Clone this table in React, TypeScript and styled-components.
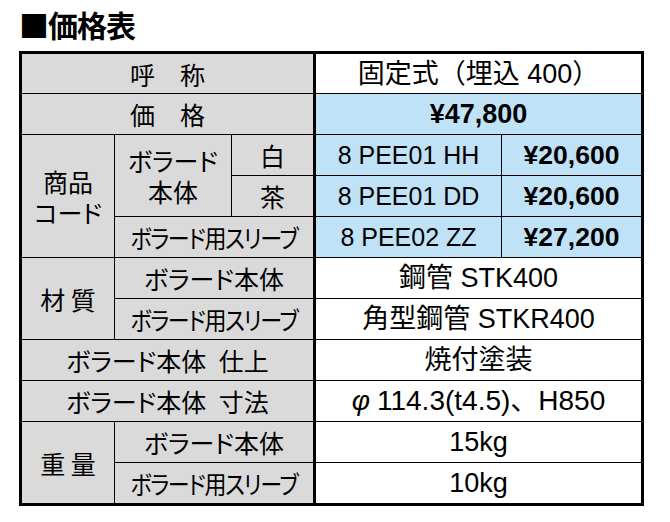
import React from 'react';
import styled, { createGlobalStyle } from 'styled-components';

const GlobalStyle = createGlobalStyle`
  html, body {
    margin: 0;
    padding: 0;
    background: #ffffff;
  }
  body {
    font-family: "Noto Sans CJK JP", sans-serif;
    color: #000;
  }
`;

type Tone = 'head' | 'blue' | 'white';

const toneColor: Record<Tone, string> = {
    head: '#dadada',
    blue: '#bfe2f7',
    white: '#ffffff',
};

interface CellProps {
    $col: string;
    $row?: string;
    $tone: Tone;
    $value?: boolean;
    $size?: number;
    $bold?: boolean;
    $split?: boolean;
}

const Styled = {
    Page: styled.div`
    padding: 4px 0 0 19px;
    width: 625px;
  `,
    Title: styled.h1`
    margin: 0 0 7px 0;
    font-family: "Noto Sans CJK JP", sans-serif;
    font-size: 30px;
    font-weight: 700;
    line-height: 40px;
    letter-spacing: -1px;
  `,
    Table: styled.div`
    display: grid;
    grid-template-columns: 92px 116px 81px 187px 139px;
    grid-template-rows: 39px repeat(10, 40px);
    gap: 1px;
    background: #000;
    border: 3px solid #000;
  `,
    Cell: styled.div<CellProps>`
    grid-column: ${p => p.$col};
    grid-row: ${p => p.$row ?? 'auto'};
    margin-left: ${p => (p.$split ? '2px' : '0')};
    display: flex;
    flex-direction: column;
    align-items: center;
    justify-content: center;
    gap: 1px;
    text-align: center;
    background: ${p => toneColor[p.$tone]};
    font-family: ${p => (p.$value ? '"Liberation Sans", "Noto Sans CJK JP", sans-serif' : '"Noto Sans CJK JP", sans-serif')};
    font-feature-settings: ${p => (p.$value ? 'normal' : '"palt"')};
    font-size: ${p => p.$size ?? 25}px;
    font-weight: ${p => (p.$bold ? 700 : 400)};
    line-height: 30px;
    white-space: nowrap;
  `,
    Squeeze: styled.span`
    display: inline-block;
    letter-spacing: -1.5px;
    transform: scaleX(0.88);
  `,
    Phi: styled.span`
    font-style: italic;
    margin-right: 7px;
  `,
};

const Sleeve = () => <Styled.Squeeze>ボラード用スリーブ</Styled.Squeeze>;
const body = 'ボラード本体';

export default function App() {
    return (
        <>
            <GlobalStyle />
            <Styled.Page>
                <Styled.Title>■価格表</Styled.Title>
                <Styled.Table>
                    <Styled.Cell $col="1 / 4" $tone="head">呼　称</Styled.Cell>
                    <Styled.Cell $col="4 / 6" $tone="white" $value $size={27} $split>固定式（埋込 400）</Styled.Cell>

                    <Styled.Cell $col="1 / 4" $tone="head">価　格</Styled.Cell>
                    <Styled.Cell $col="4 / 6" $tone="blue" $value $size={27} $bold $split>¥47,800</Styled.Cell>

                    <Styled.Cell $col="1" $row="3 / 6" $tone="head"><span>商品</span><span>コード</span></Styled.Cell>
                    <Styled.Cell $col="2" $row="3 / 5" $tone="head"><span>ボラード</span><span>本体</span></Styled.Cell>
                    <Styled.Cell $col="3" $row="3" $tone="head">白</Styled.Cell>
                    <Styled.Cell $col="4" $row="3" $tone="blue" $value $split>8 PEE01 HH</Styled.Cell>
                    <Styled.Cell $col="5" $row="3" $tone="blue" $value $size={26.5} $bold>¥20,600</Styled.Cell>
                    <Styled.Cell $col="3" $row="4" $tone="head">茶</Styled.Cell>
                    <Styled.Cell $col="4" $row="4" $tone="blue" $value $split>8 PEE01 DD</Styled.Cell>
                    <Styled.Cell $col="5" $row="4" $tone="blue" $value $size={26.5} $bold>¥20,600</Styled.Cell>
                    <Styled.Cell $col="2 / 4" $row="5" $tone="head"><Sleeve /></Styled.Cell>
                    <Styled.Cell $col="4" $row="5" $tone="blue" $value $split>8 PEE02 ZZ</Styled.Cell>
                    <Styled.Cell $col="5" $row="5" $tone="blue" $value $size={26.5} $bold>¥27,200</Styled.Cell>

                    <Styled.Cell $col="1" $row="6 / 8" $tone="head">材 質</Styled.Cell>
                    <Styled.Cell $col="2 / 4" $row="6" $tone="head">{body}</Styled.Cell>
                    <Styled.Cell $col="4 / 6" $row="6" $tone="white" $value $size={27} $split>鋼管 STK400</Styled.Cell>
                    <Styled.Cell $col="2 / 4" $row="7" $tone="head"><Sleeve /></Styled.Cell>
                    <Styled.Cell $col="4 / 6" $row="7" $tone="white" $value $size={27} $split>角型鋼管 STKR400</Styled.Cell>

                    <Styled.Cell $col="1 / 4" $row="8" $tone="head">ボラード本体{'\u2002'}仕上</Styled.Cell>
                    <Styled.Cell $col="4 / 6" $row="8" $tone="white" $value $size={27} $split>焼付塗装</Styled.Cell>

                    <Styled.Cell $col="1 / 4" $row="9" $tone="head">ボラード本体{'\u2002'}寸法</Styled.Cell>
                    <Styled.Cell $col="4 / 6" $row="9" $tone="white" $value $size={28} $split>
                        <span><Styled.Phi>φ</Styled.Phi>114.3(t4.5)、H850</span>
                    </Styled.Cell>

                    <Styled.Cell $col="1" $row="10 / 12" $tone="head">重 量</Styled.Cell>
                    <Styled.Cell $col="2 / 4" $row="10" $tone="head">{body}</Styled.Cell>
                    <Styled.Cell $col="4 / 6" $row="10" $tone="white" $value $size={27} $split>15kg</Styled.Cell>
                    <Styled.Cell $col="2 / 4" $row="11" $tone="head"><Sleeve /></Styled.Cell>
                    <Styled.Cell $col="4 / 6" $row="11" $tone="white" $value $size={27} $split>10kg</Styled.Cell>
                </Styled.Table>
            </Styled.Page>
        </>
    );
}
